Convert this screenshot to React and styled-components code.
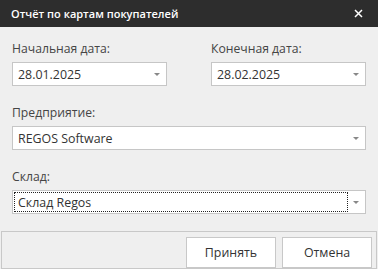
import React from "react";
import styled, { createGlobalStyle } from "styled-components";

const GlobalStyle = createGlobalStyle`
  html, body {
    margin: 0;
    padding: 0;
    background: #efefef;
  }
  body {
    font-family: "Open Sans", "Noto Sans", sans-serif;
  }
`

const Dialog = styled.div`
  width: 378px;
  height: 269px;
  background: #efefef;
  display: flex;
  flex-direction: column;
  overflow: hidden;
`

const TitleBar = styled.div`
  height: 30px;
  background: #2d2d2d;
  display: flex;
  align-items: center;
  justify-content: space-between;
  padding: 0 15px 0 11px;
  box-sizing: border-box;
`

const Title = styled.span`
  color: #fff;
  font-size: 11px;
  font-weight: 600;
`

const CloseButton = styled.span`
  display: flex;
  width: 9px;
  height: 9px;
`

const Body = styled.div`
  padding: 13px 12px 0 12px;
  display: flex;
  flex-direction: column;
  gap: 18px;
`

const Row = styled.div`
  display: flex;
  justify-content: space-between;
`

const Field = styled.div`
  display: flex;
  flex-direction: column;
  gap: 4px;
  width: ${p => p.$width || "100%"};
`

const Label = styled.label`
  height: 18px;
  line-height: 18px;
  font-size: 12.2px;
  color: #454545;
`

const Select = styled.div`
  position: relative;
  height: 24px;
  box-sizing: border-box;
  background: #fff;
  border: 1px solid #c6c6c6;
  display: flex;
  align-items: center;
  padding: 0 20px 0 5px;
  font-size: 12.4px;
  color: #333;
`

const Focus = styled.div`
  position: absolute;
  left: 1px;
  top: 1px;
  bottom: 1px;
  right: 17px;
  border: 1px dotted #222;
`

const Arrow = styled.span`
  position: absolute;
  right: 6px;
  top: 10px;
  width: 0;
  height: 0;
  border-left: 3px solid transparent;
  border-right: 3px solid transparent;
  border-top: 3px solid #888;
`

const Footer = styled.div`
  margin: 17px 1px 0 1px;
  height: 40px;
  box-sizing: border-box;
  border: 1px solid #c8c8c8;
  display: flex;
  justify-content: flex-end;
  align-items: flex-start;
  gap: 6px;
  padding: 5px 4px 0 0;
`

const Button = styled.button`
  width: 90px;
  height: 31px;
  background: #fff;
  border: 1px solid #c8c8c8;
  font-family: inherit;
  font-size: 12.4px;
  color: #333;
  padding: 0;
`

const SelectBox = ({ value, focused }) => (
  <Select>
    {focused && <Focus />}
    {value}
    <Arrow />
  </Select>
)

export default function App() {
  return (
    <Dialog>
      <GlobalStyle />
      <TitleBar>
        <Title>Отчёт по картам покупателей</Title>
        <CloseButton>
          <svg width="9" height="9" viewBox="0 0 9 9">
            <path d="M1 1 L8 8 M8 1 L1 8" stroke="#fff" strokeWidth="1.5" />
          </svg>
        </CloseButton>
      </TitleBar>
      <Body>
        <Row>
          <Field $width="155px">
            <Label>Начальная дата:</Label>
            <SelectBox value="28.01.2025" />
          </Field>
          <Field $width="155px">
            <Label>Конечная дата:</Label>
            <SelectBox value="28.02.2025" />
          </Field>
        </Row>
        <Field>
          <Label>Предприятие:</Label>
          <SelectBox value="REGOS Software" />
        </Field>
        <Field>
          <Label>Склад:</Label>
          <SelectBox value="Склад Regos" focused />
        </Field>
      </Body>
      <Footer>
        <Button>Принять</Button>
        <Button>Отмена</Button>
      </Footer>
    </Dialog>
  )
}
